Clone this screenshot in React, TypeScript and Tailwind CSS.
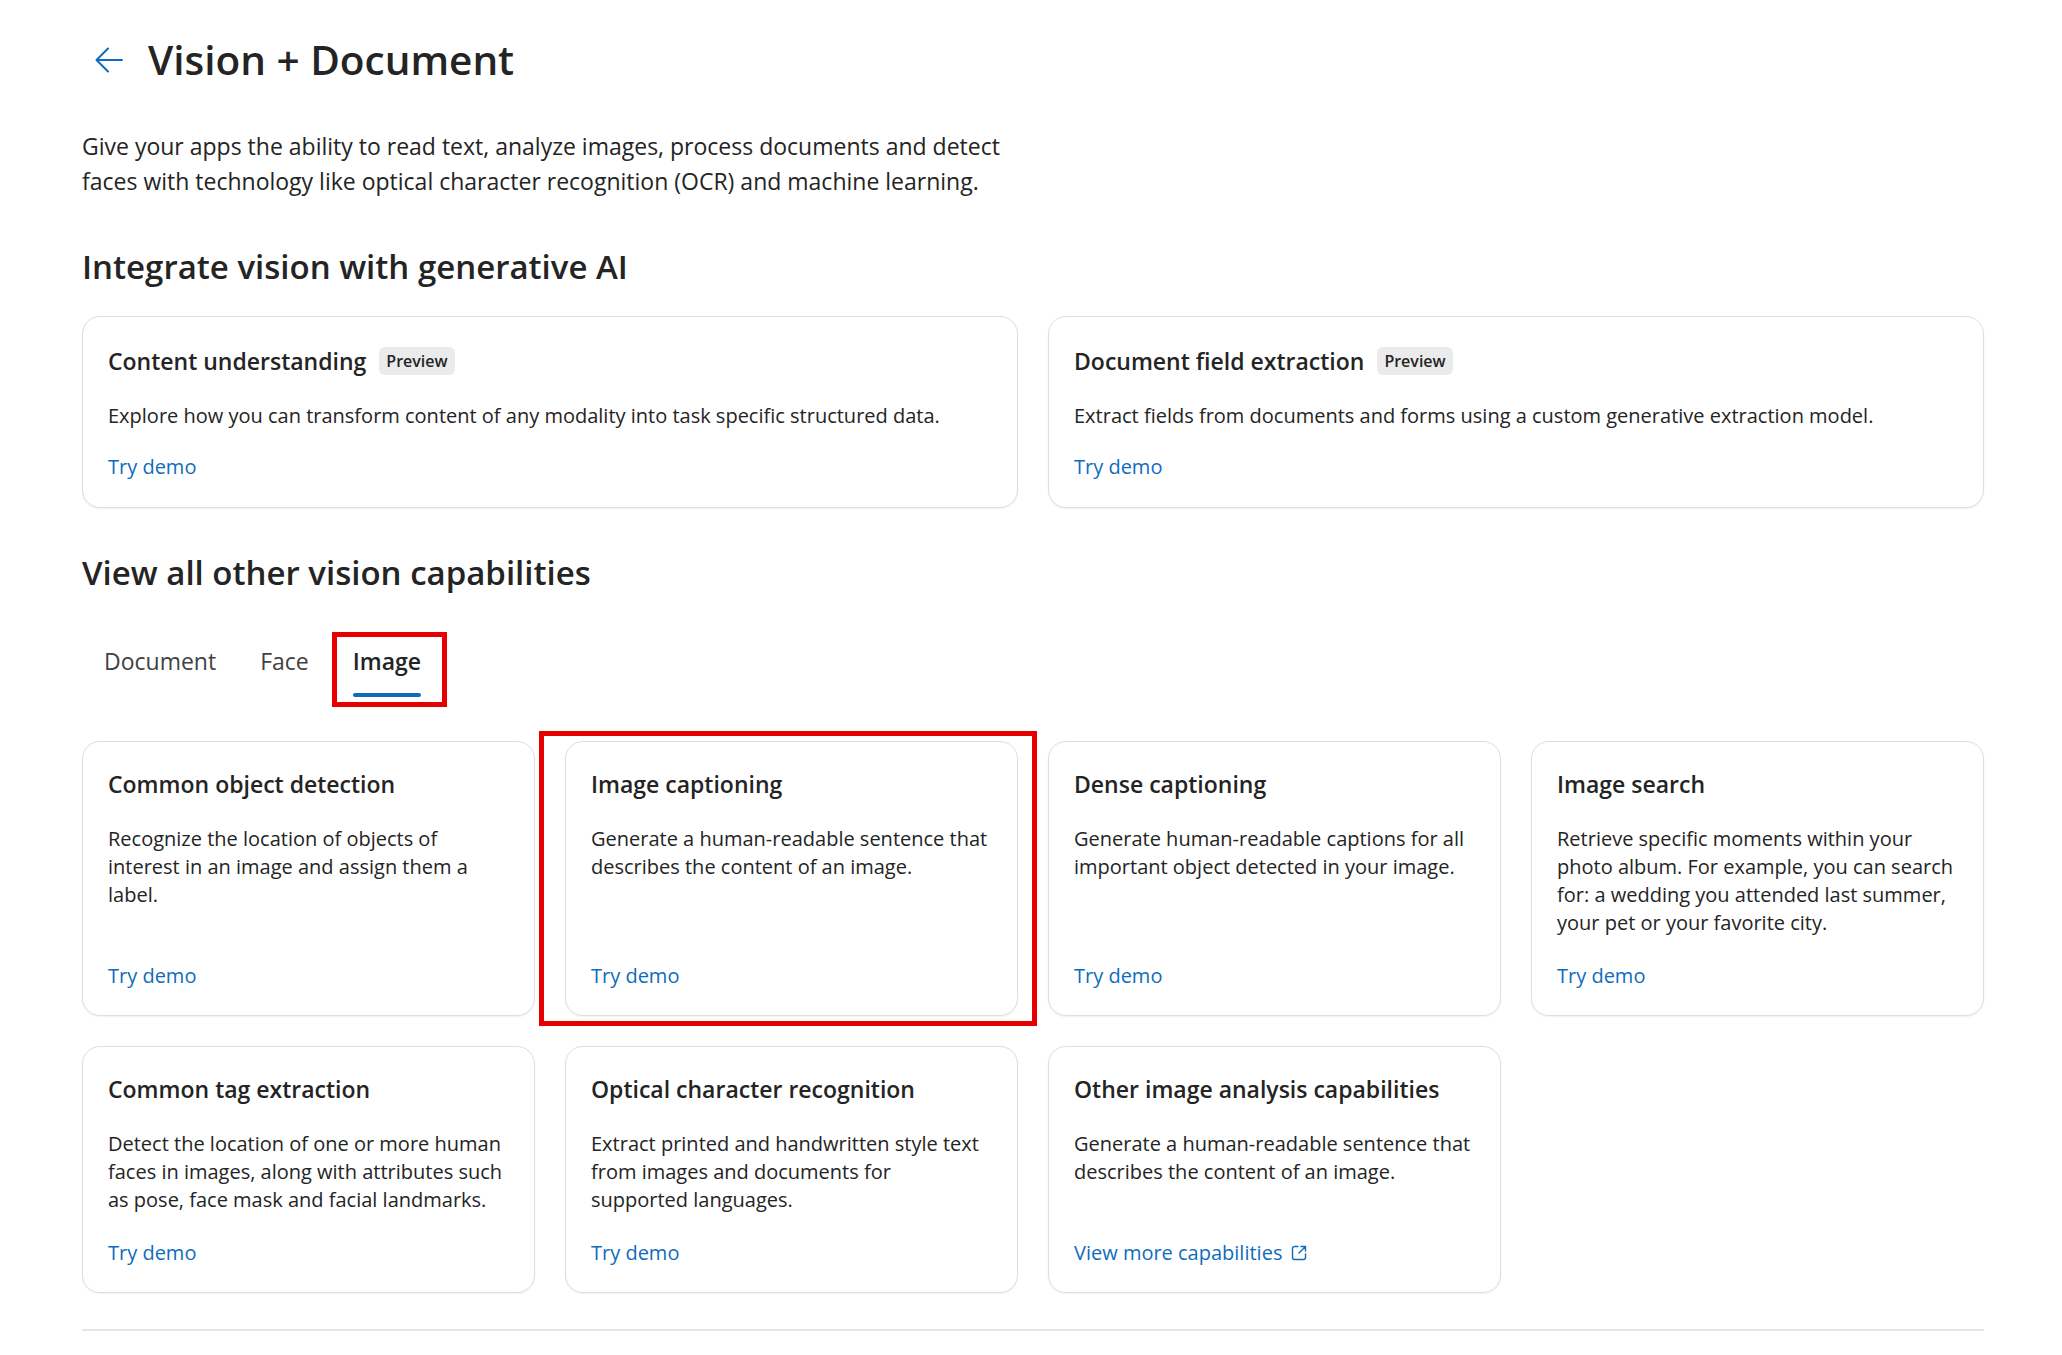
import React from 'react';

interface Capability {
  title: string;
  description: string;
  linkText?: string;
  external?: boolean;
  highlighted?: boolean;
}

const capabilities: Capability[] = [
  {
    title: 'Common object detection',
    description: 'Recognize the location of objects of interest in an image and assign them a label.',
  },
  {
    title: 'Image captioning',
    description: 'Generate a human-readable sentence that describes the content of an image.',
    highlighted: true,
  },
  {
    title: 'Dense captioning',
    description: 'Generate human-readable captions for all important object detected in your image.',
  },
  {
    title: 'Image search',
    description:
      'Retrieve specific moments within your photo album. For example, you can search for: a wedding you attended last summer, your pet or your favorite city.',
  },
  {
    title: 'Common tag extraction',
    description:
      'Detect the location of one or more human faces in images, along with attributes such as pose, face mask and facial landmarks.',
  },
  {
    title: 'Optical character recognition',
    description: 'Extract printed and handwritten style text from images and documents for supported languages.',
  },
  {
    title: 'Other image analysis capabilities',
    description: 'Generate a human-readable sentence that describes the content of an image.',
    linkText: 'View more capabilities',
    external: true,
  },
];

const BackArrow = () => (
  <svg width="28" height="26" viewBox="0 0 28 26" fill="none">
    <path d="M27 13H2M13 1.5L1.5 13L13 24.5" stroke="#0f6cbd" strokeWidth="2" strokeLinecap="round" strokeLinejoin="round" />
  </svg>
);

const ExternalIcon = () => (
  <svg width="16" height="16" viewBox="0 0 16 16" fill="none">
    <path
      d="M7 1.5H3.5A2 2 0 0 0 1.5 3.5v9a2 2 0 0 0 2 2h9a2 2 0 0 0 2-2V9"
      stroke="#0f6cbd"
      strokeWidth="1.4"
      strokeLinecap="round"
    />
    <path d="M10 1.5h4.5V6M14.5 1.5L8 8" stroke="#0f6cbd" strokeWidth="1.4" strokeLinecap="round" strokeLinejoin="round" />
  </svg>
);

function PreviewBadge() {
  return (
    <span className="inline-flex h-[28px] items-center rounded-[6px] bg-[#ebebeb] px-[7px] text-[16px] font-semibold text-[#242424]">
      Preview
    </span>
  );
}

function FeatureCard({ title, description }: { title: string; description: string }) {
  return (
    <div className="flex flex-col rounded-[18px] border border-[#dedede] bg-white px-[25px] pt-[28px] pb-[26px] shadow-[0_1px_2px_rgba(0,0,0,0.06)]">
      <div className="flex h-[32px] items-center gap-[13px]">
        <h3 className="text-[23px] leading-[32px] font-semibold text-[#242424]">{title}</h3>
        <PreviewBadge />
      </div>
      <p className="mt-[25px] text-[20px] leading-[28px] text-[#242424]">{description}</p>
      <a className="mt-[23px] text-[20px] leading-[28px] text-[#0f6cbd]">Try demo</a>
    </div>
  );
}

function CapabilityCard({ cap }: { cap: Capability }) {
  return (
    <div className="relative flex">
      <div className="flex w-full flex-col rounded-[18px] border border-[#dedede] bg-white px-[25px] pt-[26px] pb-[25px] shadow-[0_1px_2px_rgba(0,0,0,0.06)]">
        <h3 className="text-[23px] leading-[32px] font-semibold text-[#242424]">{cap.title}</h3>
        <p className="mt-[25px] text-[20px] leading-[28px] text-[#242424]">{cap.description}</p>
        <a className="mt-auto flex items-center gap-[9px] pt-[25px] text-[20px] leading-[28px] text-[#0f6cbd]">
          {cap.linkText ?? 'Try demo'}
          {cap.external && <ExternalIcon />}
        </a>
      </div>
      {cap.highlighted && (
        <div className="pointer-events-none absolute -top-[10px] -right-[19px] -bottom-[10px] -left-[26px] border-[5px] border-[#e60000]" />
      )}
    </div>
  );
}

export default function App() {
  const tabs = ['Document', 'Face', 'Image'];

  return (
    <div className="min-h-screen bg-white pl-[82px] pr-[78px] pb-[26px] font-['Open_Sans',sans-serif] text-[#242424]">
      {/* header */}
      <div className="flex items-center pt-[32px]">
        <button className="ml-[13px] flex h-[56px] items-center">
          <BackArrow />
        </button>
        <h1 className="ml-[25px] text-[40.5px] leading-[56px] font-semibold">Vision + Document</h1>
      </div>

      <p className="mt-[41px] max-w-[960px] text-[23px] leading-[35px]">
        Give your apps the ability to read text, analyze images, process documents and detect faces with technology like
        optical character recognition (OCR) and machine learning.
      </p>

      <h2 className="mt-[48px] text-[33px] leading-[40px] font-semibold">Integrate vision with generative AI</h2>

      <div className="mt-[29px] grid grid-cols-2 gap-[30px]">
        <FeatureCard
          title="Content understanding"
          description="Explore how you can transform content of any modality into task specific structured data."
        />
        <FeatureCard
          title="Document field extraction"
          description="Extract fields from documents and forms using a custom generative extraction model."
        />
      </div>

      <h2 className="mt-[45px] text-[33px] leading-[40px] font-semibold">View all other vision capabilities</h2>

      {/* tabs */}
      <div className="mt-[39px] flex">
        {tabs.map((tab) => {
          const active = tab === 'Image';
          return (
            <div key={tab} className="px-[22px] pt-[13px] pb-[10px]">
              <div className="relative flex flex-col">
                <span
                  className={`text-[23px] leading-[32px] ${active ? 'font-semibold text-[#242424]' : 'text-[#424242]'}`}
                >
                  {tab}
                </span>
                <span className={`mt-[16px] h-[4px] rounded-full ${active ? 'bg-[#0f6cbd]' : 'bg-transparent'}`} />
                {active && (
                  <div className="pointer-events-none absolute -top-[13px] -right-[26px] -bottom-[10px] -left-[21px] border-[5px] border-[#e60000]" />
                )}
              </div>
            </div>
          );
        })}
      </div>

      <div className="mt-[34px] grid grid-cols-4 gap-[30px]">
        {capabilities.map((cap) => (
          <CapabilityCard key={cap.title} cap={cap} />
        ))}
      </div>

      <div className="mt-[36px] h-[2px] bg-[#e6e6e6]" />
    </div>
  );
}
